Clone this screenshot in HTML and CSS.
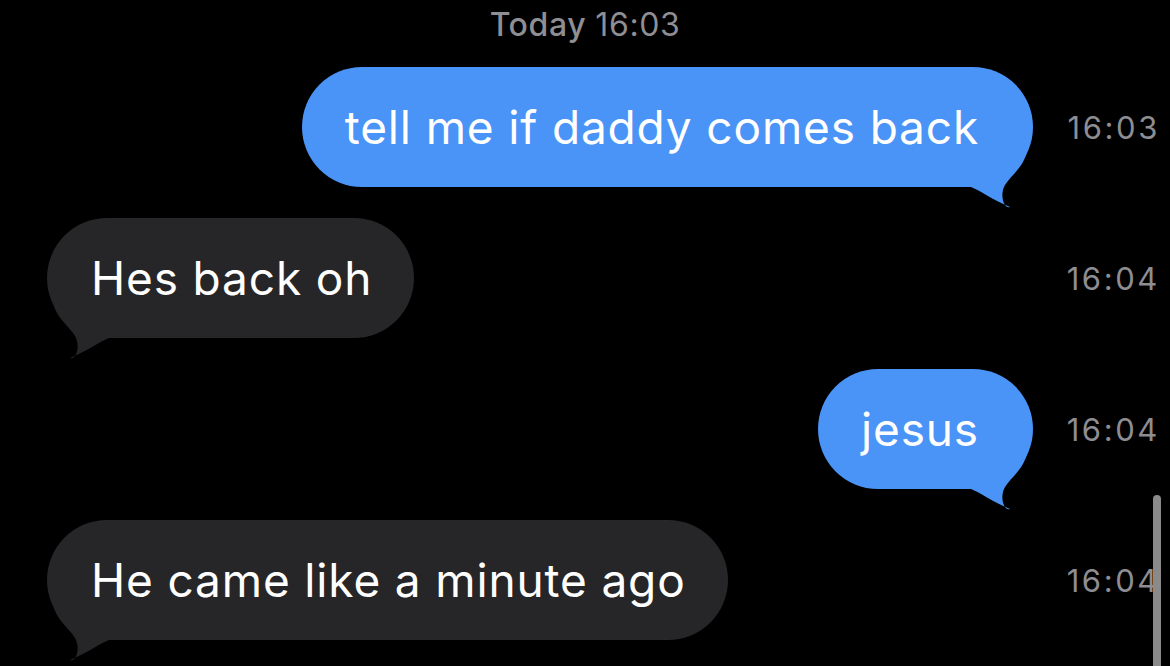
FILE: index.html
```html
<!DOCTYPE html>
<html lang="en">
<head>
    <meta charset="UTF-8">
    <title>Messages</title>
    <link rel="stylesheet" href="styles.css">
</head>
<body>

<div class="thread">
    <div class="day">Today <span>16:03</span></div>

    <div class="row sent">
        <div class="lane">
            <div class="bubble">tell me if daddy comes back
                <svg class="tail" viewBox="-70 -40 80 65"><path d="M -6 -36 C -9 -20 -22 -12 -28 -2 C -32 5 -31 14 -28 18 Q -26 21 -23 20 C -40 13 -52 4 -62 0 L -62 -36 Z"/></svg>
            </div>
        </div>
        <div class="time">16:03</div>
    </div>

    <div class="row received">
        <div class="lane">
            <div class="bubble">Hes back oh
                <svg class="tail" viewBox="-70 -40 80 65"><path d="M -6 -36 C -9 -20 -22 -12 -28 -2 C -32 5 -31 14 -28 18 Q -26 21 -23 20 C -40 13 -52 4 -62 0 L -62 -36 Z"/></svg>
            </div>
        </div>
        <div class="time">16:04</div>
    </div>

    <div class="row sent">
        <div class="lane">
            <div class="bubble">jesus
                <svg class="tail" viewBox="-70 -40 80 65"><path d="M -6 -36 C -9 -20 -22 -12 -28 -2 C -32 5 -31 14 -28 18 Q -26 21 -23 20 C -40 13 -52 4 -62 0 L -62 -36 Z"/></svg>
            </div>
        </div>
        <div class="time">16:04</div>
    </div>

    <div class="row received">
        <div class="lane">
            <div class="bubble">He came like a minute ago
                <svg class="tail" viewBox="-70 -40 80 65"><path d="M -6 -36 C -9 -20 -22 -12 -28 -2 C -32 5 -31 14 -28 18 Q -26 21 -23 20 C -40 13 -52 4 -62 0 L -62 -36 Z"/></svg>
            </div>
        </div>
        <div class="time">16:04</div>
    </div>

    <div class="scrollbar"></div>
</div>

</body>
</html>
```

FILE: styles.css
```css
html, body {
    margin: 0;
    background: #000;
}
body {
    font-family: Inter, "Liberation Sans", sans-serif;
    overflow: hidden;
    height: 666px;
}
.thread {
    position: relative;
    height: 666px;
    padding-left: 47px;
    display: flex;
    flex-direction: column;
    gap: 31px;
}
.day {
    text-align: center;
    color: #8e8e93;
    font-size: 32px;
    letter-spacing: 0.6px;
    font-weight: 500;
    padding-top: 5px;
    height: 31px;
    margin-left: -47px;
}
.day span {
    font-weight: 400;
}
.row {
    display: grid;
    grid-template-columns: 1fr 137px;
    align-items: center;
}
.lane {
    display: flex;
}
.sent .lane {
    justify-content: flex-end;
}
.bubble {
    position: relative;
    height: 120px;
    border-radius: 60px;
    display: flex;
    align-items: center;
    font-size: 46px;
    letter-spacing: 0.85px;
    color: #fff;
    white-space: nowrap;
}
.sent .bubble {
    background: #4a93f7;
    padding: 0 54px 0 43px;
}
.received .bubble {
    background: #262628;
    padding: 0 42px 0 44px;
}
.tail {
    position: absolute;
    width: 80px;
    height: 65px;
    bottom: -25px;
}
.sent .tail {
    right: -10px;
    fill: #4a93f7;
}
.received .tail {
    left: -10px;
    fill: #262628;
    transform: scaleX(-1);
}
.time {
    text-align: right;
    padding-right: 10px;
    color: #8d8d92;
    font-size: 31px;
    letter-spacing: 2.6px;
}
.scrollbar {
    position: absolute;
    right: 9px;
    top: 495px;
    bottom: -10px;
    width: 8px;
    border-radius: 4px;
    background: #8a8a8a;
}
```
